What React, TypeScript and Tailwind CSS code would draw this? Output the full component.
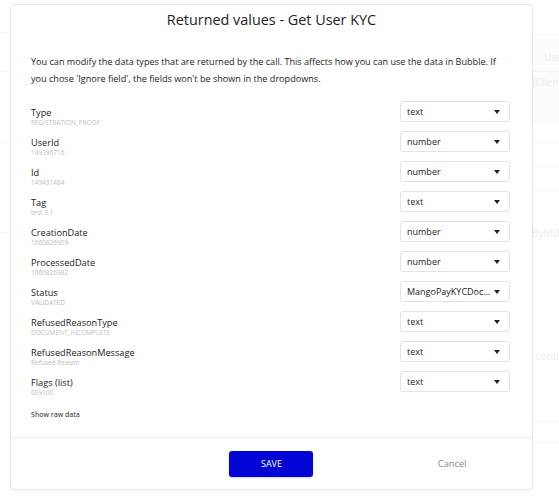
// Returned values modal over a faint page
type TField = {
    name: string
    sample: string
    type: string
}

const FIELDS: TField[] = [
    {name: 'Type', sample: 'REGISTRATION_PROOF', type: 'text'},
    {name: 'UserId', sample: '149396716', type: 'number'},
    {name: 'Id', sample: '149431484', type: 'number'},
    {name: 'Tag', sample: 'test 3.1', type: 'text'},
    {name: 'CreationDate', sample: '1660826909', type: 'number'},
    {name: 'ProcessedDate', sample: '1660826982', type: 'number'},
    {name: 'Status', sample: 'VALIDATED', type: 'MangoPayKYCDocStatus'},
    {name: 'RefusedReasonType', sample: 'DOCUMENT_INCOMPLETE', type: 'text'},
    {name: 'RefusedReasonMessage', sample: 'Refused Reason', type: 'text'},
    {name: 'Flags (list)', sample: '009100', type: 'text'},
]

const TypeSelect = ({value}: { value: string }) => {
    return (
        <div className="flex items-center w-[110px] h-[21px] border border-[#e3e3e3] rounded-[3px] bg-white pl-[6px] pr-[9px]">
            <span className="flex-1 min-w-0 truncate text-[9px] leading-[19px] text-[#222]">{value}</span>
            {/* Caret */}
            <span className="w-0 h-0 border-l-[3px] border-r-[3px] border-t-[4px] border-l-transparent border-r-transparent border-t-[#222]"/>
        </div>
    )
}

const FieldRow = ({data}: { data: TField }) => {
    return (
        <li className="flex justify-between h-[30px]">
            <div className="pt-[5px]">
                <div className="text-[9.2px] leading-[13px] text-[#222]">{data.name}</div>
                <div className="text-[6.5px] leading-[8px] text-[#bdbdbd]">{data.sample}</div>
            </div>
            <TypeSelect value={data.type}/>
        </li>
    )
}

const BackgroundPage = () => {
    return (
        <div className="flex h-[500px] bg-white">
            <div className="w-[532px] flex flex-col">
                <div className="h-[33px] border-b border-[#f7f7f7]"/>
                <div className="h-[39px] border-b border-[#f7f7f7]"/>
                <div className="h-[71px] border-b border-[#f7f7f7]"/>
                <div className="h-[90px] border-b border-[#f7f7f7]"/>
            </div>
            <div className="flex-1 flex flex-col text-[10px] text-[#ececec] whitespace-nowrap overflow-hidden">
                <div className="h-[33px]"/>
                <div className="h-[39px] bg-[#fcfcfc] border-b border-[#f3f3f3] pl-[12px] pt-[17px] leading-[14px]">User</div>
                <div className="h-[50px] bg-[#fcfcfc] border-b border-[#f7f7f7] leading-[14px] pt-[3px]">[ClientId]</div>
                <div className="h-[21px] border-b border-[#f9f9f9]"/>
                <div className="h-[24px] border-b border-[#f9f9f9]"/>
                <div className="h-[24px] border-b border-[#f9f9f9]"/>
                <div className="h-[42px] border-b border-[#f9f9f9] pt-[35px] leading-[14px]">ByMDI</div>
                <div className="h-[130px] flex items-end pl-[4px] leading-[14px]">continue</div>
                <div className="h-[59px] border-b border-[#f7f7f7]"/>
                <div className="h-[21px] border-b border-[#f7f7f7]"/>
            </div>
        </div>
    )
}

export default function App() {
    return (
        <div className="relative w-[559px] h-[500px] overflow-hidden font-['Open_Sans',sans-serif]">
            <BackgroundPage/>

            {/* Modal */}
            <div className="absolute left-[10px] top-[4px] w-[523px] h-[486px] flex flex-col bg-white border border-[#e8e8e8] rounded-[4px] shadow-[0_1px_3px_rgba(0,0,0,0.04)]">
                <div className="flex-1 px-[20px]">
                    <h2 className="pt-[4px] text-center text-[14.4px] leading-[22px] text-[#222]">
                        Returned values - Get User KYC
                    </h2>

                    <p className="mt-[22px] text-[9.1px] leading-[17px] text-[#222]">
                        You can modify the data types that are returned by the call. This affects how you can use the
                        data in Bubble. If you chose 'Ignore field', the fields won't be shown in the dropdowns.
                    </p>

                    <ul className="mt-[14px] pr-[2px]">
                        {FIELDS.map((field) => (
                            <FieldRow key={field.name} data={field}/>
                        ))}
                    </ul>

                    <div className="mt-[7px] text-[7.1px] leading-[12px] text-[#222]">Show raw data</div>
                </div>

                {/* Footer */}
                <div className="grid grid-cols-3 items-center h-[52px] border-t border-[#eeeeee]">
                    <div/>
                    <div className="flex justify-center">
                        <button className="w-[84px] h-[26px] rounded-[3px] bg-[#0205d3] text-white text-[9px] shadow-[0_1px_2px_rgba(2,5,211,0.2)]">
                            SAVE
                        </button>
                    </div>
                    <div className="flex justify-center pl-[14px]">
                        <span className="text-[9.3px] text-[#888]">Cancel</span>
                    </div>
                </div>
            </div>
        </div>
    )
}
